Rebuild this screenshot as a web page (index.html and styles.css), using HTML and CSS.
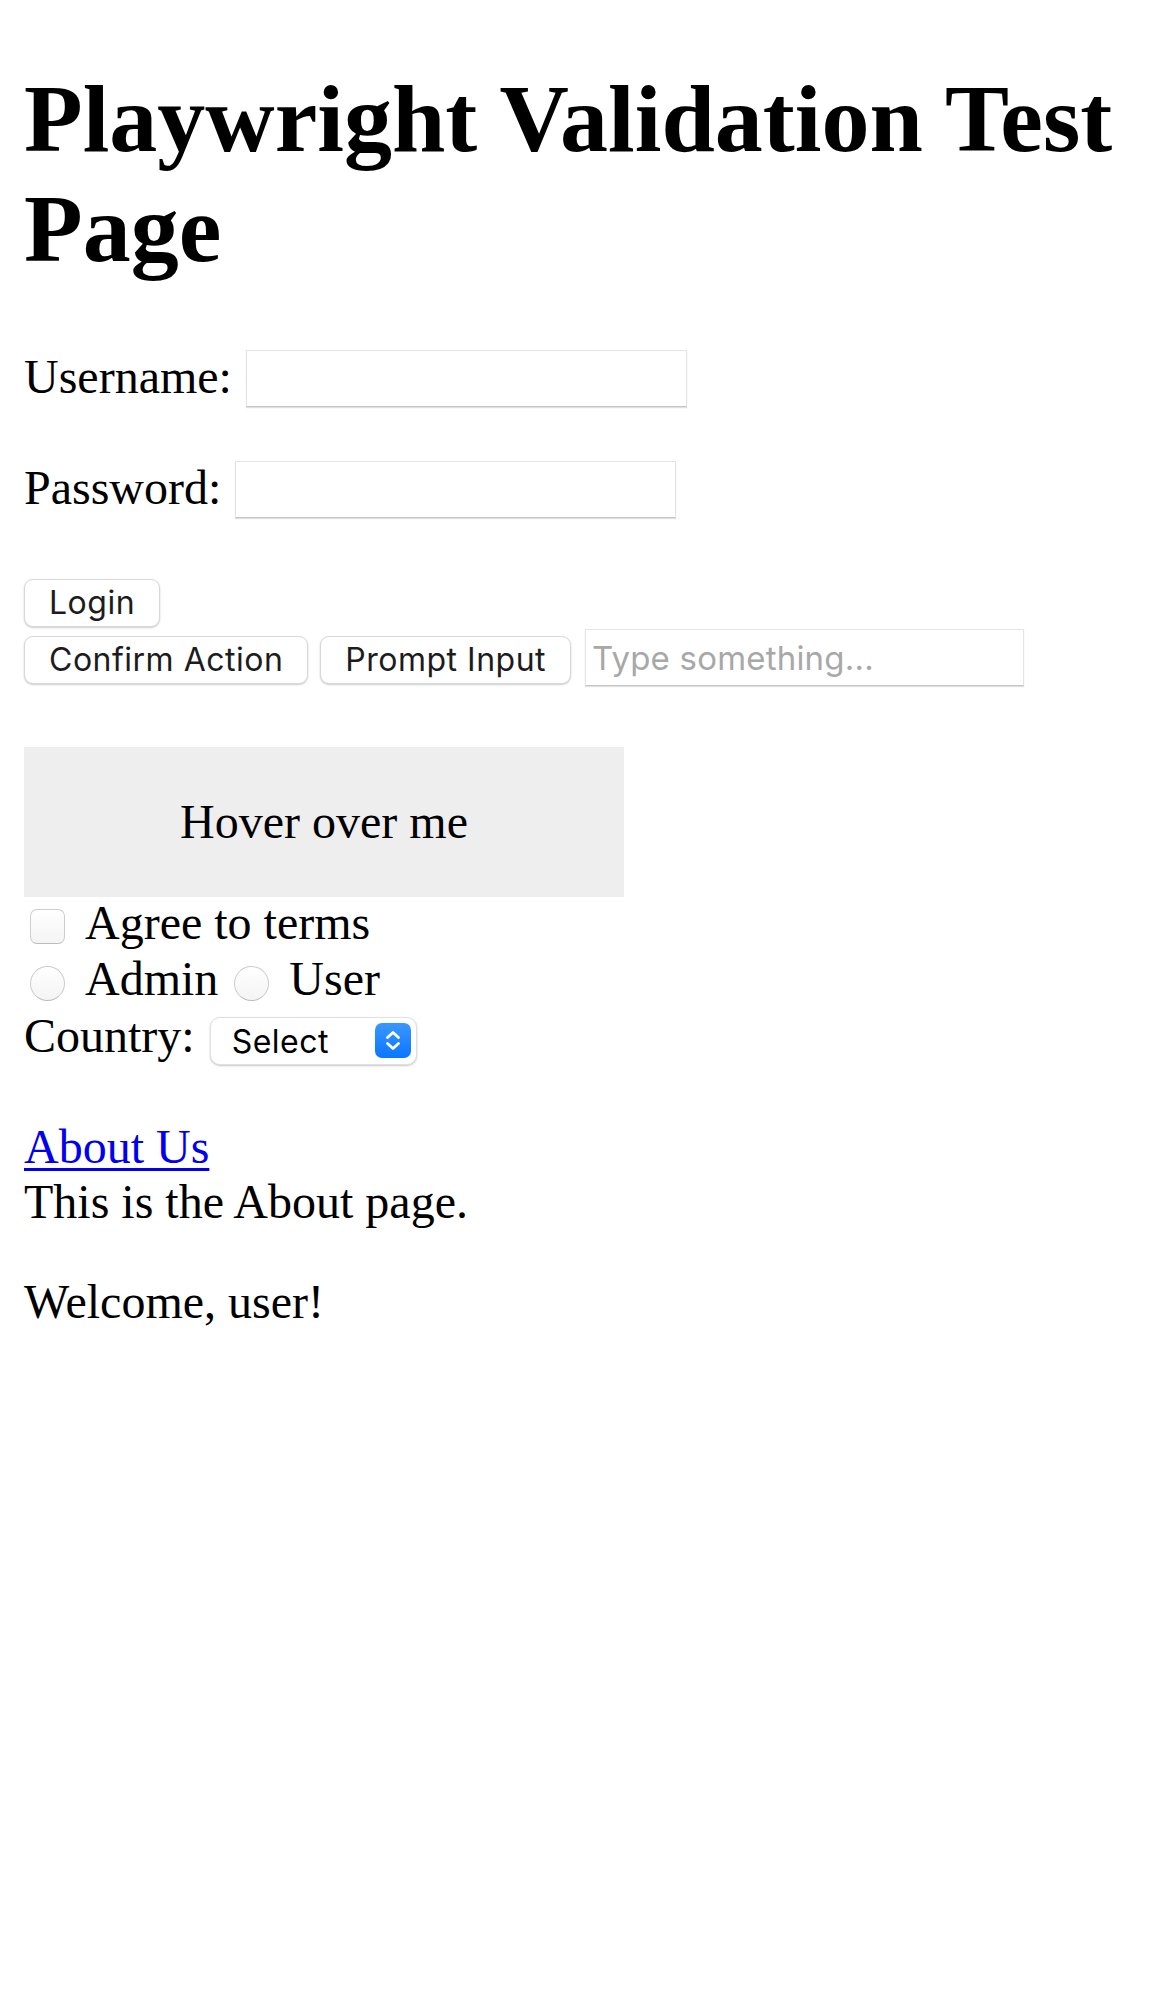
FILE: index.html
```html
<!DOCTYPE html>
<html lang="en">
<head>
<meta charset="utf-8">
<title>Playwright Validation Test Page</title>
<link rel="stylesheet" href="styles.css">
</head>
<body>
<main class="page">
  <h1 class="title">Playwright Validation Test Page</h1>

  <form class="login">
    <div class="field">
      <label class="field-label" for="username">Username:</label>
      <input class="text-input" id="username" type="text">
    </div>
    <div class="field field-last">
      <label class="field-label" for="password">Password:</label>
      <input class="text-input" id="password" type="password">
    </div>
    <button class="btn" type="button">Login</button>
  </form>

  <div class="actions">
    <button class="btn btn-confirm" type="button">Confirm Action</button>
    <button class="btn btn-prompt" type="button">Prompt Input</button>
    <input class="text-input prompt-input" type="text" placeholder="Type something...">
  </div>

  <div class="hover-box">Hover over me</div>

  <label class="check-row">
    <input class="checkbox" type="checkbox">
    <span>Agree to terms</span>
  </label>

  <div class="radio-row">
    <label class="radio-option"><input class="radio" type="radio" name="role"><span>Admin</span></label>
    <label class="radio-option radio-option-second"><input class="radio" type="radio" name="role"><span>User</span></label>
  </div>

  <div class="country-row">
    <label class="country-label" for="country">Country:</label>
    <span class="select-wrap">
      <select class="select" id="country">
        <option>Select</option>
      </select>
      <span class="select-badge">
        <svg width="36" height="35" viewBox="0 0 36 35" aria-hidden="true">
          <path d="M12.5 14.5 L18 9.5 L23.5 14.5" fill="none" stroke="#fff" stroke-width="2.8" stroke-linecap="round" stroke-linejoin="round"/>
          <path d="M12.5 20.5 L18 25.5 L23.5 20.5" fill="none" stroke="#fff" stroke-width="2.8" stroke-linecap="round" stroke-linejoin="round"/>
        </svg>
      </span>
    </span>
  </div>

  <div class="about">
    <a class="about-link" href="#about">About Us</a>
    <p class="about-text">This is the About page.</p>
  </div>

  <p class="welcome">Welcome, user!</p>
</main>
</body>
</html>
```

FILE: styles.css
```css
* {
  box-sizing: border-box;
}

body {
  margin: 0;
  background: #fff;
  color: #000;
  font-family: "Liberation Serif", "Times New Roman", serif;
  font-size: 48px;
  line-height: 55px;
}

.page {
  padding: 0 24px;
}

.title {
  font-size: 96px;
  line-height: 110px;
  font-weight: 700;
  margin: 64px 0 66px;
}

.login {
  margin: 0;
  display: flex;
  flex-direction: column;
  align-items: flex-start;
}

.field {
  display: flex;
  align-items: flex-start;
  gap: 14px;
  height: 57px;
  margin-bottom: 54px;
}

.field-last {
  margin-bottom: 61px;
}

.field-label {
  margin-top: -1px;
}

.text-input {
  -webkit-appearance: none;
  appearance: none;
  width: 441px;
  height: 57px;
  margin: 0;
  padding: 0 6px;
  background: #fff;
  border: 1px solid #e4e4e4;
  border-bottom-color: #c4c4c4;
  border-radius: 0;
  box-shadow: 0 1px 1px rgba(0, 0, 0, 0.12);
  font-family: Inter, "Noto Sans", sans-serif;
  font-size: 33px;
  letter-spacing: 0.2px;
  color: #000;
  outline: none;
}

.text-input::placeholder {
  color: #a8a8a8;
}

.btn {
  -webkit-appearance: none;
  appearance: none;
  height: 48px;
  margin: 0;
  padding: 0 24px;
  background: #fff;
  border: 1px solid #d8d8d8;
  border-radius: 9px;
  box-shadow: 0 1px 2px rgba(0, 0, 0, 0.2);
  font-family: Inter, "Noto Sans", sans-serif;
  font-size: 32px;
  line-height: 46px;
  letter-spacing: 0.5px;
  color: #1c1c1e;
  white-space: nowrap;
}

.actions {
  display: flex;
  align-items: flex-end;
  height: 57px;
  margin-top: 2px;
}

.actions .btn {
  margin-bottom: 2px;
}

.btn-prompt {
  margin-left: 12px;
}

.prompt-input {
  width: 439px;
  margin-left: 14px;
}

.hover-box {
  display: flex;
  align-items: center;
  justify-content: center;
  width: 600px;
  height: 150px;
  margin-top: 61px;
  padding-bottom: 2px;
  background: #eeeeee;
}

.check-row {
  display: flex;
  align-items: flex-start;
  height: 55px;
  margin-top: -2px;
}

.checkbox,
.radio {
  -webkit-appearance: none;
  appearance: none;
  flex: none;
  width: 35px;
  height: 35px;
  margin: 14px 20px 0 6px;
  background: linear-gradient(#ffffff, #f4f4f4);
  border: 1px solid #cdcdcd;
  border-bottom-color: #bdbdbd;
  box-shadow: inset 0 1px 1px rgba(255, 255, 255, 0.8);
}

.checkbox {
  border-radius: 7px;
}

.radio {
  border-radius: 50%;
  margin-top: 15px;
}

.radio-row {
  display: flex;
  align-items: flex-start;
  height: 55px;
  margin-top: 1px;
}

.radio-option {
  display: flex;
  align-items: flex-start;
}

.radio-option-second {
  margin-left: 10px;
}

.country-row {
  display: flex;
  align-items: flex-start;
  gap: 15px;
  height: 64px;
  margin-top: 2px;
}

.select-wrap {
  position: relative;
  display: block;
  margin-top: 9px;
}

.select {
  -webkit-appearance: none;
  appearance: none;
  display: block;
  width: 207px;
  height: 48px;
  margin: 0;
  padding: 0 0 0 21px;
  background: #fff;
  border: 1px solid #e0e0e0;
  border-radius: 10px;
  box-shadow: 0 1px 2px rgba(0, 0, 0, 0.22);
  font-family: Inter, "Noto Sans", sans-serif;
  font-size: 32px;
  letter-spacing: 0.5px;
  color: #000;
  outline: none;
}

.select-badge {
  position: absolute;
  top: 6px;
  right: 6px;
  width: 36px;
  height: 35px;
  border-radius: 7px;
  background: linear-gradient(#3a97ff, #0a77ff);
  display: flex;
  pointer-events: none;
}

.about {
  margin-top: 47px;
}

.about-link {
  color: #0000ee;
  text-decoration: underline;
  text-decoration-thickness: 3px;
  text-underline-offset: 5px;
}

.about-text {
  margin: 0;
}

.welcome {
  margin: 45px 0 0;
}
```
